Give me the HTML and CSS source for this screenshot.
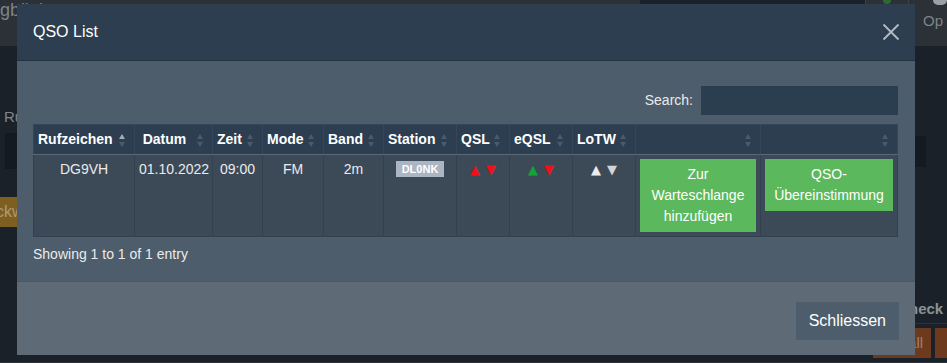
FILE: index.html
```html
<!DOCTYPE html>
<html lang="de">
<head>
  <meta charset="UTF-8" />
  <meta name="viewport" content="width=device-width, initial-scale=1" />
  <title>QSO List</title>
  <link rel="stylesheet" href="styles.css">
</head>
<body>
  <!-- page behind the dialog (dimmed) -->
  <div class="page">
    <nav class="navbar">
      <span class="brand">Logbüch</span>
      <div class="nav-search"></div>
      <div class="nav-status"><span class="dot"></span></div>
      <div class="nav-user"><span class="avatar"></span><span class="nav-link">Op</span></div>
    </nav>
    <div class="page-main">
      <div class="panel-left">
        <div class="field-label">Ru</div>
        <div class="field-input"></div>
        <div class="btn-gold">ckw</div>
      </div>
      <div class="panel-right">
        <div class="field-input small"></div>
        <div class="check-title">heck</div>
        <div class="btn-row">
          <div class="btn-orange">all</div>
          <div class="btn-orange narrow"></div>
        </div>
      </div>
    </div>
  </div>

  <div class="modal">
    <div class="modal-header">
      <h5 class="modal-title">QSO List</h5>
      <button class="close" aria-label="Close">
        <svg width="18" height="18" viewBox="0 0 18 18">
          <path d="M1.5 1.5 L16.5 16.5 M16.5 1.5 L1.5 16.5" stroke="currentColor" stroke-width="1.8" fill="none" />
        </svg>
      </button>
    </div>

    <div class="modal-body">
      <div class="dt-top">
        <label class="dt-search">Search: <input type="search" /></label>
      </div>

      <table class="qso-table">
        <colgroup>
          <col style="width:101px"><col style="width:78px"><col style="width:50px">
          <col style="width:61px"><col style="width:60px"><col style="width:73px">
          <col style="width:53px"><col style="width:63px"><col style="width:63px">
          <col style="width:125px"><col style="width:137px">
        </colgroup>
        <thead>
          <tr>
            <th class="sort-asc">Rufzeichen</th>
            <th class="th-center">Datum</th>
            <th>Zeit</th>
            <th>Mode</th>
            <th>Band</th>
            <th>Station</th>
            <th>QSL</th>
            <th>eQSL</th>
            <th>LoTW</th>
            <th></th>
            <th></th>
          </tr>
        </thead>
        <tbody>
          <tr>
            <td>DG9VH</td>
            <td>01.10.2022</td>
            <td>09:00</td>
            <td>FM</td>
            <td>2m</td>
            <td><span class="badge">DL0NK</span></td>
            <td><span class="tri red">▲</span> <span class="tri red">▼</span></td>
            <td><span class="tri green">▲</span> <span class="tri red">▼</span></td>
            <td><span class="tri white">▲</span> <span class="tri grey">▼</span></td>
            <td><button class="btn-green">Zur Warteschlange hinzufügen</button></td>
            <td><button class="btn-green">QSO-Übereinstimmung</button></td>
          </tr>
        </tbody>
      </table>

      <div class="dt-info">Showing 1 to 1 of 1 entry</div>
    </div>

    <div class="modal-footer">
      <button class="btn-secondary">Schliessen</button>
    </div>
  </div>
</body>
</html>
```

FILE: styles.css
```css
html, body {
  margin: 0;
  padding: 0;
  height: 100%;
  overflow: hidden;
}

body {
  background: #1a2129;
  color: #ebebeb;
  font-family: 'Liberation Sans', Arial, sans-serif;
  font-size: 14px;
  line-height: 21px;
}

/* ---- dimmed page behind ---- */

.page {
  height: 100%;
  display: flex;
  flex-direction: column;
}

.navbar {
  height: 46px;
  background: #2b3137;
  display: flex;
  align-items: flex-start;
  flex-shrink: 0;
}

.brand {
  width: 660px;
  margin-left: -20px;
  flex-shrink: 0;
  color: #7d848a;
  font-size: 18px;
  line-height: 20px;
}

.nav-search {
  width: 231px;
  height: 40px;
  background: #1a2129;
  border-right: 1px solid #3a4148;
}

.nav-status {
  width: 43px;
  height: 46px;
  border-right: 1px solid #3a4148;
  display: flex;
  justify-content: center;
}

.dot {
  width: 8px;
  height: 8px;
  border-radius: 50%;
  background: #2e6a33;
  margin-top: -4px;
}

.nav-user {
  flex: 1;
  display: flex;
  flex-direction: column;
  padding-left: 14px;
}

.avatar {
  width: 14px;
  height: 5px;
  margin-left: 10px;
  border-radius: 0 0 7px 7px;
  background: #9aa0a6;
}

.nav-link {
  color: #7d848a;
  font-size: 15px;
  margin-top: 5px;
}

.page-main {
  flex: 1;
  display: flex;
  justify-content: space-between;
  border-bottom: 1px solid #2b3239;
}

.panel-left {
  width: 300px;
  padding-top: 60px;
}

.field-label {
  color: #7f868c;
  font-size: 15px;
  padding-left: 4px;
}

.field-input {
  height: 36px;
  margin: 6px 0 0 5px;
  background: #131a21;
}

.btn-gold {
  margin-top: 28px;
  height: 30px;
  background: #7e5f22;
  color: #b09a70;
  font-size: 16px;
  line-height: 30px;
  text-indent: -4px;
}

.panel-right {
  width: 74px;
  padding-top: 90px;
  display: flex;
  flex-direction: column;
}

.field-input.small {
  height: 31px;
  margin: 0 0 0 41px;
  width: 12px;
}

.check-title {
  margin-top: 131px;
  padding-left: 36px;
  color: #8c9196;
  font-weight: bold;
  font-size: 15px;
  border-bottom: 1px solid #2b3239;
  padding-bottom: 4px;
}

.btn-row {
  display: flex;
  gap: 4px;
  margin-top: 4px;
}

.btn-orange {
  width: 59px;
  height: 30px;
  background: #6e3a1e;
  color: #a08070;
  font-size: 15px;
  line-height: 30px;
  text-align: right;
  padding-right: 8px;
  box-sizing: border-box;
}

.btn-orange.narrow {
  width: 12px;
}

/* ---- dialog ---- */

.modal {
  position: fixed;
  top: 4px;
  left: 17px;
  width: 898px;
  background: #4e5d6c;
}

.modal-header {
  background: #2c3e50;
  border-bottom: 1px solid #233242;
  padding: 16px;
  display: flex;
  justify-content: space-between;
  align-items: center;
}

.modal-title {
  margin: 0;
  font-size: 16px;
  font-weight: normal;
  line-height: 24px;
  color: #fff;
}

.close {
  background: none;
  border: 0;
  padding: 0;
  margin-right: -1px;
  color: #b4bbc3;
  width: 18px;
  height: 18px;
}

.close svg {
  display: block;
}

.modal-body {
  padding: 16px 17px 16px 16px;
}

.dt-top {
  display: flex;
  justify-content: flex-end;
  margin: 9px 0;
}

.dt-search {
  display: flex;
  align-items: center;
  gap: 8px;
  color: #ebebeb;
}

.dt-search input {
  width: 197px;
  height: 29px;
  box-sizing: border-box;
  border: 0;
  background: #2b3e50;
  color: #ebebeb;
  font: inherit;
}

.qso-table {
  width: 864px;
  table-layout: fixed;
  border-collapse: collapse;
}

.qso-table th {
  position: relative;
  background: #2c3e50;
  color: #fff;
  font-weight: bold;
  text-align: left;
  padding: 4px 18px 4px 4px;
  border: 1px solid #33465a;
  border-bottom: 1px solid #5a6878;
  white-space: nowrap;
}

.qso-table th.th-center {
  text-align: center;
  padding-right: 22px;
}

/* sort arrows */
.qso-table th::before,
.qso-table th::after {
  content: "";
  position: absolute;
  right: 9px;
  border-left: 3.5px solid transparent;
  border-right: 3.5px solid transparent;
}

.qso-table th::before {
  top: 9px;
  border-bottom: 5px solid #4a5b6d;
}

.qso-table th::after {
  top: 17px;
  border-top: 5px solid #4a5b6d;
}

.qso-table th.sort-asc::before {
  border-bottom-color: #a3acb6;
}

.qso-table td {
  background: #3c4a58;
  text-align: center;
  vertical-align: top;
  padding: 4px;
  border: 1px solid #33404d;
  border-top: 0;
}

.badge {
  display: inline-block;
  background: #abb6c2;
  color: #fff;
  font-size: 11px;
  font-weight: bold;
  line-height: 12px;
  padding: 2px 6px;
  vertical-align: 1px;
}

.tri {
  display: inline-block;
  margin: 0 1px;
  font-family: 'DejaVu Sans', sans-serif;
  font-size: 13px;
}

.tri.red { color: #f0101a; }
.tri.green { color: #13a336; }
.tri.white { color: #ececec; }
.tri.grey { color: #d2d4d6; }

.btn-green {
  display: block;
  width: 100%;
  border: 0;
  background: #5cb85c;
  color: #fff;
  font: inherit;
  line-height: 21px;
  padding: 5px 6px;
}

.dt-info {
  padding-top: 7px;
  color: #ebebeb;
}

.modal-footer {
  background: #5e6b77;
  border-top: 1px solid #4a5866;
  padding: 20px 16px 15px;
  display: flex;
  justify-content: flex-end;
}

.btn-secondary {
  background: #4e5d6c;
  color: #fff;
  border: 1px solid #4e5d6c;
  font: inherit;
  font-size: 16px;
  line-height: 24px;
  padding: 6px 12px;
}
```
